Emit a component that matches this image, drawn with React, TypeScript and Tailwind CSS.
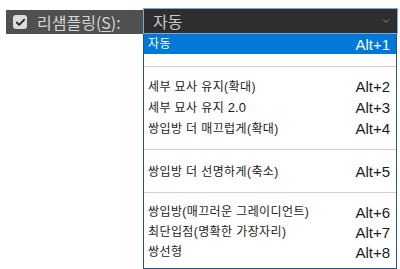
import { Check, ChevronDown } from "lucide-react";
import type { ReactNode } from "react";

type Item = { label: ReactNode; key: string };

const KO = "font-['Noto_Sans_CJK_KR','Noto_Sans',sans-serif]";
const MIX = "font-['Liberation_Sans','Noto_Sans_CJK_KR',sans-serif]";

function Row({ item, active, h }: { item: Item; active?: boolean; h: string }) {
    return (
        <div
            className={`flex items-center justify-between pl-[4px] pr-[6px] ${h} ${
                active ? "bg-[#0078d7] text-white" : "text-[#1a1a1a]"
            }`}
        >
            <span className={`${MIX} text-[12px] tracking-[0.4px] leading-none`}>{item.label}</span>
            <span className="font-['Liberation_Sans',Arial,sans-serif] text-[15px] leading-none">{item.key}</span>
        </div>
    );
}

function Separator({ top, h }: { top: string; h: string }) {
    return (
        <div className={`${h} ${top}`}>
            <div className="h-px bg-[#cfcfcf]" />
        </div>
    );
}

export default function App() {
    return (
        <div className="w-[400px] h-[269px] bg-white flex items-start overflow-hidden">
            <div className="ml-[6px] mt-[10px] w-[137px] h-[24px] bg-[#505050] flex items-center gap-[10px] pl-[7px]">
                <div className="w-[14px] h-[14px] rounded-[3px] bg-[#dcdcdc] flex items-center justify-center">
                    <Check size={11} strokeWidth={4} color="#2a2a2a" />
                </div>
                <span className={`${KO} text-[16px] leading-none text-[#d6d6d6]`}>
                    리샘플링(<span className="underline underline-offset-2">S</span>):
                </span>
            </div>

            <div className="mt-[8px] w-[255px] flex flex-col">
                <div className="h-[26px] border border-[#7aa7e0] bg-[#2e2e2e] flex items-center justify-between pl-[9px] pr-[6px]">
                    <span className={`${KO} text-[16px] leading-none text-[#c8c8c8]`}>자동</span>
                    <ChevronDown size={10} strokeWidth={2} color="#9a9a9a" />
                </div>
                <div className="w-[254px] h-[235px] border-l border-r border-b border-[#2b4f7e] bg-white flex flex-col">
                    <Row item={{ label: "자동", key: "Alt+1" }} active h="h-[20px]" />
                    <Separator top="pt-[12px]" h="h-[22px]" />
                    <Row item={{ label: "세부 묘사 유지(확대)", key: "Alt+2" }} h="h-[21px]" />
                    <Row
                        item={{
                            label: (
                                <>
                                    세부 묘사 유지{" "}
                                    <span className="font-['Liberation_Sans',Arial,sans-serif] text-[13px] tracking-normal">2.0</span>
                                </>
                            ),
                            key: "Alt+3",
                        }}
                        h="h-[21px]"
                    />
                    <Row item={{ label: "쌍입방 더 매끄럽게(확대)", key: "Alt+4" }} h="h-[21px]" />
                    <Separator top="pt-[10px]" h="h-[22px]" />
                    <Row item={{ label: "쌍입방 더 선명하게(축소)", key: "Alt+5" }} h="h-[21px]" />
                    <Separator top="pt-[10px]" h="h-[20px]" />
                    <Row item={{ label: "쌍입방(매끄러운 그레이디언트)", key: "Alt+6" }} h="h-[20px]" />
                    <Row item={{ label: "최단입점(명확한 가장자리)", key: "Alt+7" }} h="h-[20px]" />
                    <Row item={{ label: "쌍선형", key: "Alt+8" }} h="h-[20px]" />
                </div>
            </div>
        </div>
    );
}
